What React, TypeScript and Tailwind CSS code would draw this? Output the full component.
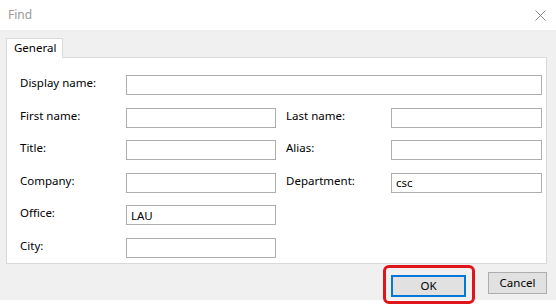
import React from 'react';

const font = { fontFamily: '"Noto Sans", "Open Sans", Arial, sans-serif' };

const Field = ({ value = '', wide = false }: { value?: string; wide?: boolean }) => (
  <div
    className={`h-[20px] border border-[#adadad] bg-white px-[4px] flex items-center text-[11.5px] text-black ${wide ? 'col-span-3' : ''}`}
  >
    {value}
  </div>
);

const Label = ({ children }: { children: React.ReactNode }) => (
  <div className="h-[20px] text-[11.5px] leading-[16px] text-black">{children}</div>
);

const App = () => {
  return (
    <div className="w-[556px] h-[306px] bg-white flex flex-col" style={font}>
      <div className="h-[30px] flex items-center justify-between pl-[8px] pr-[10px]">
        <span className="text-[12px] text-[#9a9a9a]">Find</span>
        <svg width="11" height="11" viewBox="0 0 11 11">
          <path d="M0.5 0.5 L10.5 10.5 M10.5 0.5 L0.5 10.5" stroke="#8a8a8a" strokeWidth="1" fill="none" />
        </svg>
      </div>

      <div className="h-[270px] bg-[#f0f0f0] pl-[6px] pr-[9px] pt-[8px] flex flex-col">
        <div className="flex">
          <div className="relative z-10 -mb-px h-[20px] w-[57px] bg-white border border-b-0 border-[#d9d9d9] pl-[7px] text-[11.5px] leading-[18px] text-black">
            General
          </div>
        </div>
        <div className="h-[207px] w-[541px] bg-white border border-[#d9d9d9] pl-[13px] pt-[17px]">
          <div className="grid grid-cols-[106px_150px_115px_151px] gap-x-0 gap-y-[12.6px]">
            <Label>Display name:</Label>
            <Field wide />

            <Label>First name:</Label>
            <Field />
            <div className="pl-[10px]"><Label>Last name:</Label></div>
            <Field />

            <Label>Title:</Label>
            <Field />
            <div className="pl-[10px]"><Label>Alias:</Label></div>
            <Field />

            <Label>Company:</Label>
            <Field />
            <div className="pl-[10px]"><Label>Department:</Label></div>
            <Field value="csc" />

            <Label>Office:</Label>
            <Field value="LAU" />
            <div />
            <div />

            <Label>City:</Label>
            <Field />
            <div />
            <div />
          </div>
        </div>

        <div className="flex justify-end items-start gap-[22px] mt-[8px]">
          <div className="relative">
            <button className="w-[75px] h-[22px] bg-[#e1e1e1] border-2 border-[#0078d7] text-[11.5px] text-black">
              OK
            </button>
            <div className="absolute -left-[8px] -right-[9px] -top-[7px] -bottom-[7px] border-[3px] border-[#e0151b] rounded-[6px] pointer-events-none" />
          </div>
          <button className="w-[59px] h-[22px] bg-[#e1e1e1] border border-[#adadad] text-[11.5px] text-black">
            Cancel
          </button>
        </div>
      </div>
    </div>
  );
};

export default App;
